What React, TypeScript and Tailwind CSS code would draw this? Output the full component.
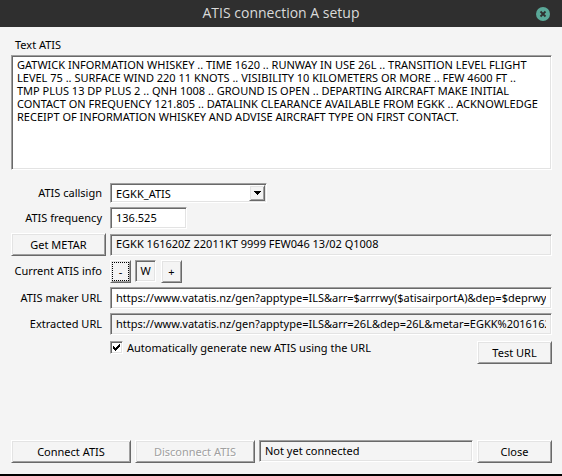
import { useState } from 'react'
import type { ReactNode } from 'react'
import { clsx } from 'clsx'

const sunken =
  'border border-t-[#a0a0a0] border-l-[#a0a0a0] border-b-white border-r-white shadow-[inset_1px_1px_0_#696969,inset_-1px_-1px_0_#e3e3e3]'
const raised =
  'border border-t-white border-l-white border-b-[#696969] border-r-[#696969] shadow-[inset_1px_1px_0_#e3e3e3,inset_-1px_-1px_0_#a0a0a0]'

const ATIS_TEXT = [
  'GATWICK INFORMATION WHISKEY .. TIME 1620 .. RUNWAY IN USE 26L .. TRANSITION LEVEL FLIGHT',
  'LEVEL 75 .. SURFACE WIND 220 11 KNOTS .. VISIBILITY 10 KILOMETERS OR MORE .. FEW 4600 FT ..',
  'TMP PLUS 13 DP PLUS 2 .. QNH 1008 .. GROUND IS OPEN .. DEPARTING AIRCRAFT MAKE INITIAL',
  'CONTACT ON FREQUENCY 121.805 .. DATALINK CLEARANCE AVAILABLE FROM EGKK .. ACKNOWLEDGE',
  'RECEIPT OF INFORMATION WHISKEY AND ADVISE AIRCRAFT TYPE ON FIRST CONTACT.',
].join('\n')

interface PushButtonProps {
  children: ReactNode
  className?: string
  disabled?: boolean
  focused?: boolean
  onClick?: () => void
}

function PushButton({ children, className, disabled, focused, onClick }: PushButtonProps) {
  return (
    <button
      type="button"
      disabled={disabled}
      onClick={onClick}
      className={clsx(
        'relative h-[23px] shrink-0 bg-[#f4f4f4] whitespace-nowrap',
        raised,
        disabled && 'text-[#a0a0a0] [text-shadow:1px_1px_0_#fff]',
        className,
      )}
    >
      {children}
      {focused && <span className="absolute inset-px border border-dotted border-black" />}
    </button>
  )
}

interface TextFieldProps {
  id: string
  value: string
  className?: string
  readOnly?: boolean
  label?: string
}

function TextField({ id, value, className, readOnly, label }: TextFieldProps) {
  return (
    <input
      id={id}
      type="text"
      defaultValue={value}
      readOnly={readOnly}
      aria-label={label}
      className={clsx(
        'h-[22px] min-w-0 rounded-none px-[5px] pb-0.5 outline-none',
        readOnly ? 'bg-[#f4f4f4]' : 'bg-white',
        sunken,
        className,
      )}
    />
  )
}

function FieldLabel({ htmlFor, children }: { htmlFor: string; children: ReactNode }) {
  return (
    <label htmlFor={htmlFor} className="pr-1 pb-0.5 text-right whitespace-nowrap">
      {children}
    </label>
  )
}

export default function App() {
  const [letter, setLetter] = useState('W')

  const step = (by: number) => {
    const next = (letter.charCodeAt(0) - 65 + by + 26) % 26
    setLetter(String.fromCharCode(65 + next))
  }

  return (
    <div className="flex min-h-screen flex-col border-b-2 border-black bg-[#f4f4f4] font-['Noto_Sans',sans-serif] text-[11px] leading-[13px] text-black">
      <header className="grid h-[27px] grid-cols-[1fr_auto_1fr] items-center bg-[#2f2f2f] px-3">
        <h1 className="col-start-2 pb-0.5 font-['Open_Sans',sans-serif] text-[14px] leading-5 text-[#dadada]">
          ATIS connection A setup
        </h1>
        <button type="button" aria-label="Close window" className="justify-self-end">
          <svg width="14" height="14" viewBox="0 0 14 14">
            <circle cx="7" cy="7" r="7" fill="#5aa898" />
            <path d="M4.5 4.5l5 5M9.5 4.5l-5 5" stroke="#2f2f2f" strokeWidth="1.8" />
          </svg>
        </button>
      </header>

      <main className="flex flex-1 flex-col pt-[11px] pr-[10px] pb-[11px] pl-[11px]">
        <label htmlFor="atis-text" className="mb-1 pl-1">
          Text ATIS
        </label>
        <textarea
          id="atis-text"
          defaultValue={ATIS_TEXT}
          className={clsx(
            'h-[115px] w-full resize-none overflow-hidden rounded-none bg-white px-[5px] py-0.5 whitespace-pre outline-none',
            sunken,
          )}
        />

        <div className="mt-[13px] grid grid-cols-[95px_1fr] items-center gap-1">
          <FieldLabel htmlFor="callsign">ATIS callsign</FieldLabel>
          <div className="relative h-5 w-[157px]">
            <select
              id="callsign"
              className={clsx('h-full w-full appearance-none rounded-none bg-white px-[5px] outline-none', sunken)}
            >
              <option>EGKK_ATIS</option>
            </select>
            <span
              className={clsx(
                'pointer-events-none absolute inset-y-0.5 right-0.5 flex w-4 items-center justify-center bg-[#f4f4f4]',
                raised,
              )}
            >
              <svg width="7" height="4" viewBox="0 0 7 4" shapeRendering="crispEdges">
                <path d="M0 0h7v1H0zM1 1h5v1H1zM2 2h3v1H2zM3 3h1v1H3z" />
              </svg>
            </span>
          </div>

          <FieldLabel htmlFor="frequency">ATIS frequency</FieldLabel>
          <TextField id="frequency" value="136.525" className="w-[77px]" />

          <PushButton>Get METAR</PushButton>
          <TextField id="metar" label="METAR" readOnly value="EGKK 161620Z 22011KT 9999 FEW046 13/02 Q1008" />

          <FieldLabel htmlFor="letter">Current ATIS info</FieldLabel>
          <div className="flex items-start gap-1">
            <PushButton focused className="w-[21px]" onClick={() => step(-1)}>
              -
            </PushButton>
            <input
              id="letter"
              readOnly
              value={letter}
              className={clsx('h-[22px] w-[21px] rounded-none bg-[#f4f4f4] pb-0.5 text-center outline-none', sunken)}
            />
            <PushButton className="ml-px w-[21px]" onClick={() => step(1)}>
              +
            </PushButton>
          </div>

          <FieldLabel htmlFor="maker-url">ATIS maker URL</FieldLabel>
          <TextField
            id="maker-url"
            value="https://www.vatatis.nz/gen?apptype=ILS&arr=$arrrwy($atisairportA)&dep=$deprwy($atisairportA)"
          />

          <FieldLabel htmlFor="extracted-url">Extracted URL</FieldLabel>
          <TextField
            id="extracted-url"
            readOnly
            value="https://www.vatatis.nz/gen?apptype=ILS&arr=26L&dep=26L&metar=EGKK%20161620Z%2022011KT"
          />

          <div className="col-start-2 flex items-start justify-between pt-0.5">
            <label className="flex items-center gap-1">
              <span className="relative flex">
                <input
                  type="checkbox"
                  defaultChecked
                  className={clsx('peer h-[13px] w-[13px] appearance-none bg-white outline-none', sunken)}
                />
                <svg
                  className="pointer-events-none absolute inset-0 hidden peer-checked:block"
                  width="13"
                  height="13"
                  viewBox="0 0 13 13"
                  shapeRendering="crispEdges"
                >
                  <path d="M3 5h1v3H3zM4 6h1v3H4zM5 7h1v3H5zM6 6h1v3H6zM7 5h1v3H7zM8 4h1v3H8zM9 3h1v3H9z" />
                </svg>
              </span>
              Automatically generate new ATIS using the URL
            </label>
            <PushButton className="w-[75px]">Test URL</PushButton>
          </div>
        </div>

        <footer className="mt-auto flex items-start gap-1">
          <PushButton className="w-[120px]">Connect ATIS</PushButton>
          <PushButton disabled className="w-[120px]">
            Disconnect ATIS
          </PushButton>
          <TextField id="status" label="Status" readOnly value="Not yet connected" className="flex-1" />
          <PushButton className="w-[75px]">Close</PushButton>
        </footer>
      </main>
    </div>
  )
}
